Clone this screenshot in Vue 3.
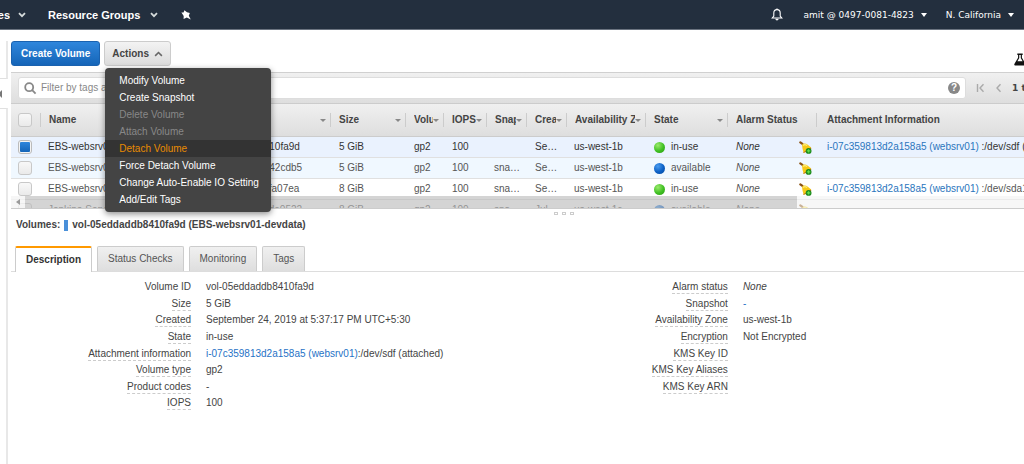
<script setup>
import { ref } from 'vue'

const menuItems = [
  { label: 'Modify Volume' },
  { label: 'Create Snapshot' },
  { label: 'Delete Volume', disabled: true },
  { label: 'Attach Volume', disabled: true },
  { label: 'Detach Volume', active: true },
  { label: 'Force Detach Volume' },
  { label: 'Change Auto-Enable IO Setting' },
  { label: 'Add/Edit Tags' },
]

const columns = [
  { key: 'name', label: 'Name', sort: true },
  { key: 'id', label: 'Volume ID', sort: true },
  { key: 'size', label: 'Size', sort: true },
  { key: 'type', label: 'Volume Type', sort: true },
  { key: 'iops', label: 'IOPS', sort: true },
  { key: 'snap', label: 'Snapshot', sort: true },
  { key: 'created', label: 'Created', sort: true },
  { key: 'zone', label: 'Availability Zone', sort: true },
  { key: 'state', label: 'State', sort: true },
  { key: 'alarm', label: 'Alarm Status' },
  { key: 'attach', label: 'Attachment Information' },
]

const rows = ref([
  { name: 'EBS-websrv01-devdata', id: 'vol-05eddaddb8410fa9d', size: '5 GiB', iops: '100', snap: '', created: 'Se…', zone: 'us-west-1b', state: 'in-use', link: 'i-07c359813d2a158a5 (websrv01)', dev: ':/dev/sdf (attached)', checked: true, tone: 'selected' },
  { name: 'EBS-websrv01-data', id: 'vol-0a61e93b5d042cdb5', size: '5 GiB', iops: '100', snap: 'sna…', created: 'Se…', zone: 'us-west-1b', state: 'available', link: '', dev: '', checked: false, tone: 'hover' },
  { name: 'EBS-websrv01-root', id: 'vol-0b27d5c4e91fa07ea', size: '8 GiB', iops: '100', snap: 'sna…', created: 'Se…', zone: 'us-west-1b', state: 'in-use', link: 'i-07c359813d2a158a5 (websrv01)', dev: ':/dev/sda1 (attached)', checked: false, tone: '' },
  { name: 'Jenkins-Server', id: 'vol-0c94a7d1e36de0522', size: '8 GiB', iops: '100', snap: 'sna…', created: 'Jul…', zone: 'us-west-1c', state: 'available', link: '', dev: '', checked: false, tone: '' },
])

const tabs = ['Description', 'Status Checks', 'Monitoring', 'Tags']

const leftDetails = [
  { label: 'Volume ID', value: 'vol-05eddaddb8410fa9d', plain: true },
  { label: 'Size', value: '5 GiB' },
  { label: 'Created', value: 'September 24, 2019 at 5:37:17 PM UTC+5:30' },
  { label: 'State', value: 'in-use' },
  { label: 'Attachment information', link: 'i-07c359813d2a158a5 (websrv01)', value: ':/dev/sdf (attached)' },
  { label: 'Volume type', value: 'gp2' },
  { label: 'Product codes', value: '-' },
  { label: 'IOPS', value: '100' },
]

const rightDetails = [
  { label: 'Alarm status', value: 'None', italic: true },
  { label: 'Snapshot', link: '-', value: '' },
  { label: 'Availability Zone', value: 'us-west-1b' },
  { label: 'Encryption', value: 'Not Encrypted' },
  { label: 'KMS Key ID', value: '' },
  { label: 'KMS Key Aliases', value: '' },
  { label: 'KMS Key ARN', value: '' },
]
</script>

<template>
  <div class="page">
    <header class="nav">
      <button class="nav-item services" aria-label="Services"><span>Services</span></button>
      <svg class="nav-chev" viewBox="0 0 8 6"><path d="M1 1.2 4 4.2 7 1.2" /></svg>
      <button class="nav-item groups">Resource Groups</button>
      <svg class="nav-chev second" viewBox="0 0 8 6"><path d="M1 1.2 4 4.2 7 1.2" /></svg>
      <button class="nav-item pin" aria-label="Pin shortcuts">
        <svg viewBox="0 0 10 10"><path d="M3.4.3 6 2.3 8.8 3 7.8 5.8 9.8 9.6 5.8 7.4 2.6 9 2.7 6 .4 2.6 2.6 2.6Z" /></svg>
      </button>
      <div class="nav-right">
        <button class="nav-item bell" aria-label="Notifications">
          <svg viewBox="0 0 12 13"><path class="line" d="M1.2 10 2.8 8V5C2.8 2.9 4.2 1.6 6 1.6S9.2 2.9 9.2 5V8L10.8 10Z" /><path class="solid" d="M4.3 10.8H7.7C7.4 12 6.8 12.5 6 12.5S4.6 12 4.3 10.8ZM5.4.4H6.6V1.8H5.4Z" /></svg>
        </button>
        <button class="nav-item account">amit @ 0497-0081-4823<i class="caret"></i></button>
        <button class="nav-item region">N. California<i class="caret"></i></button>
      </div>
    </header>

    <div class="body">
      <aside class="rail">
        <div class="rail-top"></div>
        <button class="rail-handle" aria-label="Collapse navigation"><i></i></button>
        <div class="rail-bottom"></div>
      </aside>

      <main class="main">
        <div class="toolbar">
          <button class="btn primary">Create Volume</button>
          <div class="actions">
            <button class="btn" aria-expanded="true">Actions
              <svg viewBox="0 0 8 5"><path d="M1 4.2 4 1.2 7 4.2" /></svg>
            </button>
            <div class="menu" role="menu">
              <button v-for="m in menuItems" :key="m.label" role="menuitem" :class="{ active: m.active }" :disabled="m.disabled">{{ m.label }}</button>
            </div>
          </div>
          <button class="flask" aria-label="Labs">
            <svg viewBox="0 0 13 13"><path fill-rule="evenodd" d="M3.6 0H9.4V1.5H8.6V4.6L12.6 11.5Q13 13 11.8 13H1.2Q0 13 .4 11.5L4.4 4.6V1.5H3.6ZM5.7 1.5V5L3.7 8.4H9.3L7.3 5V1.5Z" /></svg>
          </button>
        </div>

        <div class="filter-bar">
          <div class="search">
            <svg class="lens" viewBox="0 0 13 13"><circle cx="5.2" cy="5.2" r="4" /><path d="M8.2 8.2 11.6 11.6" /></svg>
            <input type="text" aria-label="Filter volumes" placeholder="Filter by tags and attributes or search by keyword" />
            <button class="help" aria-label="Help">?</button>
          </div>
          <div class="pager">
            <button aria-label="First page"><svg viewBox="0 0 9 10"><path d="M1.5 1V9M7.5 1.2 4 5 7.5 8.8" /></svg></button>
            <button aria-label="Previous page"><svg viewBox="0 0 9 10"><path d="M6.5 1.2 3 5 6.5 8.8" /></svg></button>
            <span>1 to 4 of 4</span>
          </div>
        </div>

        <div class="grid">
          <table>
            <colgroup>
              <col class="c-check" />
              <col v-for="c in columns" :key="c.key" :class="'c-' + c.key" />
            </colgroup>
            <thead>
              <tr>
                <th><div class="th-in check"><input type="checkbox" aria-label="Select all volumes" /></div></th>
                <th v-for="c in columns" :key="c.key">
                  <div class="th-in"><span>{{ c.label }}</span><i v-if="c.sort" class="sort"></i></div>
                </th>
              </tr>
            </thead>
            <tbody>
              <tr v-for="r in rows" :key="r.id" :class="r.tone">
                <td class="check"><input v-model="r.checked" type="checkbox" :aria-label="'Select ' + r.name" /></td>
                <td class="tight">{{ r.name }}</td>
                <td>{{ r.id }}</td>
                <td>{{ r.size }}</td>
                <td>gp2</td>
                <td>{{ r.iops }}</td>
                <td class="tight">{{ r.snap }}</td>
                <td>{{ r.created }}</td>
                <td class="tight">{{ r.zone }}</td>
                <td><div class="state"><i :class="r.state"></i>{{ r.state }}</div></td>
                <td class="alarm">
                  <div>
                    <em>None</em>
                    <svg viewBox="0 0 13 13">
                      <path d="M1.3 1.3 3.4 2.9" stroke="#8a5212" stroke-width="2.2" stroke-linecap="round" />
                      <path d="M3 3.8C4.4 1.9 6.8 2 8.8 3.8L12.2 6.6Q9.4 10.2 4.6 11.6L3.6 8Z" fill="#f7c917" />
                      <path d="M4.2 4.6C5.2 3.4 6.6 3.4 8 4.6" fill="none" stroke="#fdee7a" stroke-width="1.2" />
                      <path d="M4.4 11.5Q9.2 10.2 12.1 6.8" fill="none" stroke="#c07a10" stroke-width="1.1" />
                      <circle cx="9.6" cy="9.9" r="2.9" fill="#1d8a1d" />
                      <path d="M9.6 8.2V11.6M7.9 9.9H11.3" stroke="#5fe04a" stroke-width="1.2" />
                    </svg>
                  </div>
                </td>
                <td class="attach"><a v-if="r.link" href="#">{{ r.link }}</a> {{ r.dev }}</td>
              </tr>
            </tbody>
          </table>
          <div class="hscroll"><span class="arrow"></span><span class="thumb"></span><span class="rest"></span></div>
        </div>

        <div class="splitter"><i></i><i></i><i></i></div>

        <h2 class="title">Volumes: <i></i><span>vol-05eddaddb8410fa9d (EBS-websrv01-devdata)</span></h2>

        <div class="tabs" role="tablist">
          <button v-for="(t, i) in tabs" :key="t" role="tab" :aria-selected="i === 0" :class="{ current: i === 0 }">{{ t }}</button>
        </div>

        <section class="details">
          <dl v-for="(list, n) in [leftDetails, rightDetails]" :key="n">
            <div v-for="d in list" :key="d.label">
              <dt><span :class="{ plain: d.plain }">{{ d.label }}</span></dt>
              <dd :class="{ italic: d.italic }"><a v-if="d.link" href="#">{{ d.link }}</a>{{ d.value }}</dd>
            </div>
          </dl>
        </section>
      </main>
    </div>
  </div>
</template>

<style>
body {
  background: #fff;
}
</style>

<style scoped>
* {
  box-sizing: border-box;
}
.page {
  display: flex;
  flex-direction: column;
  min-height: 100vh;
  overflow: hidden;
  font: 10px/16px "Liberation Sans", Arial, sans-serif;
  color: #444;
}
button {
  margin: 0;
  padding: 0;
  border: 0;
  background: none;
  font: inherit;
  color: inherit;
  white-space: nowrap;
  cursor: pointer;
}
a {
  color: #1f72c6;
  text-decoration: none;
}
svg {
  display: block;
}

.nav {
  display: flex;
  align-items: center;
  height: 30px;
  background: #232f3e;
  border-bottom: 1px solid #6b7480;
  color: #fff;
}
.services {
  display: flex;
  justify-content: flex-end;
  width: 10px;
  overflow: hidden;
  font-size: 11px;
  font-weight: bold;
}
.groups {
  margin-left: 22px;
  font-size: 11px;
  font-weight: bold;
}
.nav-chev {
  width: 8px;
  height: 6px;
  margin-left: 8px;
}
.nav-chev.second {
  margin-left: 10px;
}
.nav-chev path {
  fill: none;
  stroke: #d5dbdb;
  stroke-width: 1.8;
}
.pin {
  margin-left: 23px;
}
.pin svg {
  width: 10px;
  height: 10px;
  fill: #fff;
}
.nav-right {
  display: flex;
  align-items: center;
  margin-left: auto;
  padding-right: 10px;
  font-family: "DejaVu Sans", Verdana, sans-serif;
  font-size: 9px;
}
.bell svg {
  width: 12px;
  height: 13px;
}
.bell .line {
  fill: none;
  stroke: #fff;
  stroke-width: 1.1;
}
.bell .solid {
  fill: #fff;
}
.account {
  margin-left: 21px;
}
.region {
  margin-left: 19px;
}
.caret {
  display: inline-block;
  margin-left: 7px;
  border: 3px solid transparent;
  border-top: 4px solid #fff;
  border-bottom: 0;
  vertical-align: 1px;
}

.body {
  display: flex;
  flex: 1;
}
.rail {
  display: flex;
  flex-direction: column;
  flex: none;
  width: 11px;
  padding-top: 11px;
}
.rail-top,
.rail-bottom {
  width: 8px;
  border-right: 2px solid #e8e8e8;
}
.rail-top {
  height: 38px;
  border-bottom: 1px solid #e0e0e0;
}
.rail-bottom {
  flex: 1;
  border-top: 1px solid #e0e0e0;
}
.rail-handle {
  display: flex;
  align-items: center;
  height: 29px;
}
.rail-handle i {
  border: 4px solid transparent;
  border-right-color: #777;
  border-left: 0;
  margin-left: -2px;
}

.main {
  flex: 1;
  min-width: 0;
}
.toolbar {
  display: flex;
  align-items: center;
  gap: 4px;
  padding: 11px 0 6px;
}
.btn {
  display: flex;
  align-items: center;
  gap: 5px;
  height: 25px;
  padding: 0 7px;
  border: 1px solid #ccc;
  border-radius: 3px;
  background: linear-gradient(#f3f3f3, #dcdcdc);
  font-size: 10px;
  font-weight: bold;
  color: #444;
}
.btn svg {
  width: 9px;
  height: 6px;
}
.btn path {
  fill: none;
  stroke: #666;
  stroke-width: 1.4;
}
.btn.primary {
  padding: 0 9px;
  border-color: #1a62b0;
  background: linear-gradient(#2f86dc, #1565b8);
  color: #fff;
}
.actions {
  position: relative;
}
.menu {
  position: absolute;
  z-index: 5;
  top: 27px;
  left: 1px;
  width: 166px;
  padding: 4px 0;
  border-radius: 4px;
  background: #444;
  box-shadow: 0 2px 6px rgba(0, 0, 0, 0.45);
}
.menu button {
  display: block;
  width: 100%;
  padding-left: 14px;
  line-height: 17px;
  text-align: left;
  color: #fff;
}
.menu button:disabled {
  color: #888;
}
.menu button.active {
  background: #333;
  color: #e88b01;
}
.flask {
  margin-left: auto;
  margin-right: -2px;
  padding-top: 12px;
}
.flask svg {
  width: 12px;
  height: 13px;
  fill: #111;
}

.filter-bar {
  display: flex;
  align-items: center;
  height: 32px;
  padding-left: 7px;
  overflow: hidden;
  border-top: 1px solid #d0d0d0;
  border-bottom: 1px solid #ccc;
  background: linear-gradient(#f0f0f0, #dedede);
}
.search {
  display: flex;
  align-items: center;
  flex: 1;
  height: 22px;
  padding: 0 5px;
  border: 1px solid #ddd;
  border-radius: 3px;
  background: #fff;
}
.lens {
  width: 13px;
  height: 13px;
  fill: none;
  stroke: #888;
  stroke-width: 1.8;
}
.search input {
  flex: 1;
  min-width: 0;
  padding: 0 4px;
  border: 0;
  outline: 0;
  background: none;
  font: inherit;
}
.search input::placeholder {
  color: #888;
  opacity: 1;
}
.help {
  width: 12px;
  height: 12px;
  border-radius: 50%;
  background: #888;
  font-size: 10px;
  font-weight: bold;
  line-height: 12px;
  color: #fff;
}
.pager {
  display: flex;
  align-items: center;
  gap: 9px;
  width: 58px;
  padding-left: 10px;
  font-weight: bold;
  white-space: nowrap;
}
.pager svg {
  width: 9px;
  height: 10px;
  fill: none;
  stroke: #aaa;
  stroke-width: 1.4;
}
.pager span {
  font-family: "DejaVu Sans", Verdana, sans-serif;
  font-size: 9px;
}

.grid {
  position: relative;
  max-height: 105px;
  overflow: hidden;
  border-bottom: 1px solid #ccc;
}
table {
  width: 100%;
  table-layout: fixed;
  border-collapse: separate;
  border-spacing: 0;
}
.c-check { width: 30px; }
.c-name { width: 143px; }
.c-id { width: 147px; }
.c-size { width: 75px; }
.c-type { width: 38px; }
.c-iops { width: 43px; }
.c-snap { width: 40px; }
.c-created { width: 40px; }
.c-zone { width: 79px; }
.c-state { width: 82px; }
.c-alarm { width: 89px; }
th {
  height: 33px;
  padding: 0;
  border-bottom: 1px solid #ccc;
  background: linear-gradient(#f0f0f0, #dedede);
  text-align: left;
}
.th-in {
  display: flex;
  align-items: center;
  height: 14px;
  padding: 0 4px 0 8px;
  border-right: 1px solid #ccc;
  white-space: nowrap;
}
th:last-child .th-in {
  border-right: 0;
}
.th-in span {
  flex: 1;
  overflow: hidden;
}
.sort {
  flex: none;
  border: 3px solid transparent;
  border-top-color: #888;
  border-bottom: 0;
}
.th-in.check,
td.check {
  padding: 0 0 0 7px;
}
input[type="checkbox"] {
  display: block;
  appearance: none;
  flex: none;
  width: 14px;
  height: 14px;
  margin: 0;
  border: 1px solid #c8c8c8;
  border-radius: 3px;
  background: linear-gradient(#f8f8f8, #eaeaea);
}
input[type="checkbox"]:checked {
  padding: 1px;
  border-color: #bbb;
  background: linear-gradient(#2f86dc, #1565b8) content-box, #f4f4f4;
}
td {
  height: 21px;
  padding: 0 0 0 8px;
  overflow: hidden;
  border-bottom: 1px solid #e0e0e0;
  white-space: nowrap;
  color: #555;
}
.selected td {
  background: #eaf2fe;
  color: #333;
}
.hover td {
  background: #f0f8ff;
}
td.tight {
  padding-left: 7px;
}
td.attach {
  padding-left: 10px;
}
th:last-child .th-in {
  padding-left: 10px;
}
td a {
  color: #2a75bd;
}
.state {
  display: flex;
  align-items: center;
  gap: 6px;
}
.state i {
  width: 11px;
  height: 11px;
  border-radius: 50%;
  background: radial-gradient(circle at 35% 30%, #9aea6c, #3fbf22 55%, #2a9a12);
}
.state i.available {
  background: radial-gradient(circle at 35% 30%, #4a9cf0, #0b5fc4 55%, #064a9e);
}
.alarm div {
  display: flex;
  align-items: center;
  justify-content: space-between;
  padding-right: 5px;
}
.alarm svg {
  width: 13px;
  height: 13px;
}
.hscroll {
  position: absolute;
  right: 0;
  bottom: 0;
  left: 0;
  display: flex;
  height: 12px;
}
.hscroll .arrow {
  display: flex;
  align-items: center;
  justify-content: center;
  width: 14px;
  background: rgba(244, 244, 244, 0.8);
}
.hscroll .arrow::before {
  content: "";
  border: 3px solid transparent;
  border-right: 4px solid #999;
  border-left: 0;
}
.hscroll .thumb {
  flex: 17;
  background: rgba(185, 185, 185, 0.62);
}
.hscroll .rest {
  flex: 5;
  background: rgba(242, 242, 242, 0.6);
}

.splitter {
  display: flex;
  justify-content: center;
  gap: 4px;
  padding: 3px 0 0 92px;
}
.splitter i {
  width: 4px;
  height: 3px;
  border: 1px solid #ccc;
}
.title {
  display: flex;
  align-items: center;
  margin: 0;
  padding: 2px 0 0 5px;
  font-size: 10px;
  line-height: 16px;
}
.title i {
  width: 4px;
  height: 11px;
  margin: 0 4px;
  background: #4a90d9;
}
.tabs {
  display: flex;
  gap: 5px;
  margin-top: 13px;
  padding-left: 4px;
  border-bottom: 1px solid #ddd;
}
.tabs button {
  height: 25px;
  padding: 0 10px;
  border: 1px solid #ccc;
  border-bottom: 0;
  border-radius: 2px 2px 0 0;
  background: linear-gradient(#f0f0f0, #dedede);
  color: #555;
}
.tabs .current {
  height: 26px;
  margin-bottom: -1px;
  border-top: 2px solid #f90;
  background: #fff;
  font-weight: bold;
  color: #333;
}
.details {
  display: grid;
  grid-template-columns: 53fr 47fr;
  padding-top: 7px;
}
dl {
  display: grid;
  grid-template-rows: repeat(8, 1fr);
  min-height: 133px;
  margin: 0;
}
dl div {
  display: grid;
  grid-template-columns: 180px 1fr;
  gap: 15px;
}
dt {
  text-align: right;
}
dt span {
  padding-bottom: 1px;
  border-bottom: 1px dashed #ccc;
}
dt .plain {
  border-bottom: 0;
}
dd {
  margin: 0;
}
dd.italic {
  font-style: italic;
}
</style>
